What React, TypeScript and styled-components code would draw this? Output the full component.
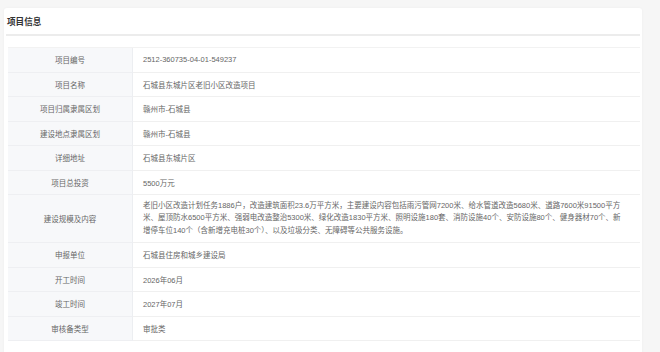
import React from "react";
import styled, { createGlobalStyle } from "styled-components";

const Global = createGlobalStyle`
  html, body { margin: 0; padding: 0; background: #f6f6f6; }
  body { font-family: "Liberation Sans", "Noto Sans CJK SC", sans-serif; }
`;

const Page = styled.div`
  width: 660px;
  height: 352px;
  overflow: hidden;
  box-sizing: border-box;
  padding: 8px 18px 0 4px;
`;

const Card = styled.section`
  background: #fff;
  min-height: 360px;
  border-radius: 3px;
  box-shadow: 0 0 3px rgba(0, 0, 0, 0.04);
`;

const Header = styled.div`
  height: 26px;
  margin: 0 2px;
  padding-left: 1px;
  display: flex;
  align-items: center;
  font-size: 8.6px;
  font-weight: 700;
  color: #333;
  border-bottom: 2px solid #ececec;
`;

const Table = styled.div`
  margin: 11px 2px 0 4px;
  display: grid;
  grid-template-columns: 125px 1fr;
  border-top: 1px solid #f2f2f2;
`;

const Label = styled.div`
  background: #f7f8fa;
  border-right: 1px solid #eceef1;
  border-bottom: 1px solid #eeeff2;
  display: flex;
  align-items: center;
  justify-content: center;
  font-size: 7.5px;
  color: #666;
  min-height: 23.5px;
`;

const Value = styled.div<{ $multi?: boolean }>`
  border-bottom: 1px solid #f0f0f0;
  display: flex;
  align-items: center;
  padding: ${(p) => (p.$multi ? "5px 8px 5px 10px" : "0 10px")};
  font-size: 7.5px;
  line-height: ${(p) => (p.$multi ? "12.4px" : "normal")};
  color: #666;
  min-height: 23.5px;
`;

const Line = styled.span`
  display: block;
  white-space: nowrap;
`;

const rows: { label: string; value: string | string[] }[] = [
  { label: "项目编号", value: "2512-360735-04-01-549237" },
  { label: "项目名称", value: "石城县东城片区老旧小区改造项目" },
  { label: "项目归属隶属区划", value: "赣州市-石城县" },
  { label: "建设地点隶属区划", value: "赣州市-石城县" },
  { label: "详细地址", value: "石城县东城片区" },
  { label: "项目总投资", value: "5500万元" },
  {
    label: "建设规模及内容",
    value: [
      "老旧小区改造计划任务1886户，改造建筑面积23.6万平方米，主要建设内容包括雨污管网7200米、给水管道改造5680米、道路7600米91500平方",
      "米、屋顶防水6500平方米、强弱电改造整治5300米、绿化改造1830平方米、照明设施180套、消防设施40个、安防设施80个、健身器材70个、新",
      "增停车位140个（含新增充电桩30个）、以及垃圾分类、无障碍等公共服务设施。",
    ],
  },
  { label: "申报单位", value: "石城县住房和城乡建设局" },
  { label: "开工时间", value: "2026年06月" },
  { label: "竣工时间", value: "2027年07月" },
  { label: "审核备类型", value: "审批类" },
];

export default function App() {
  return (
    <>
      <Global />
      <Page>
        <Card>
          <Header>项目信息</Header>
          <Table>
            {rows.map((r) => (
              <React.Fragment key={r.label}>
                <Label>{r.label}</Label>
                {Array.isArray(r.value) ? (
                  <Value $multi>
                    <div>
                      {r.value.map((l, i) => (
                        <Line key={i}>{l}</Line>
                      ))}
                    </div>
                  </Value>
                ) : (
                  <Value>{r.value}</Value>
                )}
              </React.Fragment>
            ))}
          </Table>
        </Card>
      </Page>
    </>
  );
}
